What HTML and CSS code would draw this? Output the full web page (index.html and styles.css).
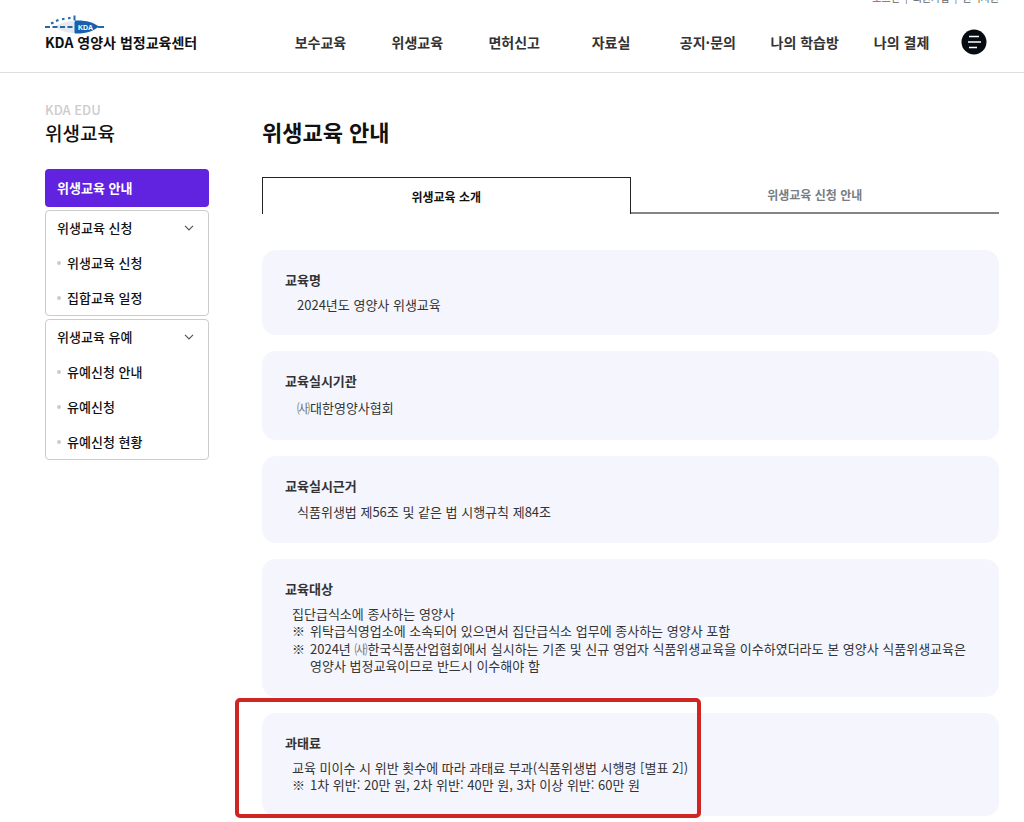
FILE: index.html
```html
<!DOCTYPE html>
<html lang="ko">
<head>
<meta charset="utf-8">
<meta name="viewport" content="width=device-width, initial-scale=1">
<title>위생교육 안내 - KDA 영양사 법정교육센터</title>
<link rel="stylesheet" href="styles.css">
</head>
<body>
<header class="header">
  <ul class="util">
    <li><a href="#">로그인</a></li>
    <li><a href="#">회원가입</a></li>
    <li><a href="#">원격지원</a></li>
  </ul>
  <div class="header-bar">
    <a class="logo" href="#">
      <svg class="logo-mark" viewBox="0 0 60 20" width="60" height="20" aria-hidden="true">
        <path d="M10 11.500C15 8 22 6.500 30 6V18C22 18 15 16 10 11.500Z" fill="#e6eaee"/>
        <path d="M30 5.500C40 5 48 7 54 11.500C48 16.500 40 19 30 18.500Z" fill="#1760ae"/>
        <path d="M0 12h5M7.500 12h5M15 12h5M22.500 12h5M53 12h6" stroke="#2468aa" stroke-width="2"/>
        <path d="M6 8.500l2.500-1M11 6l2.500-1M17 4.200l2.500-.5M23 3.200l2.500-.3M29.500 .5v5" stroke="#2468aa" stroke-width="2"/>
        <path d="M29.500 7v11" stroke="#78a6d2" stroke-width="1"/>
        <text x="33" y="14.500" class="logo-kda">KDA</text>
      </svg>
      <span class="logo-text">KDA 영양사 법정교육센터</span>
    </a>
    <nav class="gnb" aria-label="주 메뉴">
      <a href="#">보수교육</a>
      <a href="#">위생교육</a>
      <a href="#">면허신고</a>
      <a href="#">자료실</a>
      <a href="#">공지·문의</a>
      <a href="#">나의 학습방</a>
      <a href="#">나의 결제</a>
    </nav>
    <button class="menu-btn" type="button" aria-label="전체 메뉴">
      <svg viewBox="0 0 26 26" width="26" height="26" aria-hidden="true">
        <circle cx="13" cy="13" r="12.500" fill="#070b12"/>
        <path d="M8 7.500h10M7 13h13M8 18.500h8" stroke="#fff" stroke-width="1.500"/>
      </svg>
    </button>
  </div>
</header>

<div class="page">
  <aside class="side">
    <p class="side-eyebrow">KDA EDU</p>
    <h2 class="side-title">위생교육</h2>
    <nav class="lnb" aria-label="위생교육 메뉴">
      <a class="lnb-current" href="#" aria-current="page">위생교육 안내</a>
      <div class="lnb-group">
        <button class="lnb-head" type="button" aria-expanded="true">위생교육 신청
          <svg viewBox="0 0 10 6" width="10" height="6" aria-hidden="true"><path d="M1 .8l4 4 4-4" fill="none" stroke="#555" stroke-width="1.200"/></svg>
        </button>
        <ul class="lnb-list">
          <li><a href="#">위생교육 신청</a></li>
          <li><a href="#">집합교육 일정</a></li>
        </ul>
      </div>
      <div class="lnb-group">
        <button class="lnb-head" type="button" aria-expanded="true">위생교육 유예
          <svg viewBox="0 0 10 6" width="10" height="6" aria-hidden="true"><path d="M1 .8l4 4 4-4" fill="none" stroke="#555" stroke-width="1.200"/></svg>
        </button>
        <ul class="lnb-list">
          <li><a href="#">유예신청 안내</a></li>
          <li><a href="#">유예신청</a></li>
          <li><a href="#">유예신청 현황</a></li>
        </ul>
      </div>
    </nav>
  </aside>

  <main class="main">
    <h1 class="title">위생교육 안내</h1>
    <div class="tabs" role="tablist">
      <button class="tab tab-active" type="button" role="tab" aria-selected="true">위생교육 소개</button>
      <button class="tab" type="button" role="tab" aria-selected="false">위생교육 신청 안내</button>
    </div>
    <div class="cards">
      <section class="card">
        <h3>교육명</h3>
        <p class="value">2024년도 영양사 위생교육</p>
      </section>
      <section class="card">
        <h3>교육실시기관</h3>
        <p class="value value-tall"><span class="mark">㈔</span>대한영양사협회</p>
      </section>
      <section class="card">
        <h3>교육실시근거</h3>
        <p class="value value-mid">식품위생법 제56조 및 같은 법 시행규칙 제84조</p>
      </section>
      <section class="card">
        <h3>교육대상</h3>
        <div class="detail">
          <p>집단급식소에 종사하는 영양사</p>
          <ul class="notes">
            <li><p>위탁급식영업소에 소속되어 있으면서 집단급식소 업무에 종사하는 영양사 포함</p></li>
            <li><p>2024년 <span class="mark">㈔</span>한국식품산업협회에서 실시하는 기존 및 신규 영업자 식품위생교육을 이수하였더라도 본 영양사 식품위생교육은 영양사 법정교육이므로 반드시 이수해야 함</p></li>
          </ul>
        </div>
      </section>
      <section class="card card-marked">
        <h3>과태료</h3>
        <div class="detail">
          <p>교육 미이수 시 위반 횟수에 따라 과태료 부과(식품위생법 시행령 [별표 2])</p>
          <ul class="notes">
            <li><p>1차 위반: 20만 원, 2차 위반: 40만 원, 3차 이상 위반: 60만 원</p></li>
          </ul>
        </div>
      </section>
    </div>
  </main>
</div>
</body>
</html>
```

FILE: styles.css
```css
*,
*::before,
*::after {
  box-sizing: border-box;
}

body {
  margin: 0;
  background: #fff;
  color: #333;
  font-family: "Noto Sans CJK KR", "Noto Sans", sans-serif;
  font-size: 13px;
  word-break: keep-all;
}

h1, h2, h3, p, ul {
  margin: 0;
  padding: 0;
}

ul {
  list-style: none;
}

a {
  color: inherit;
  text-decoration: none;
}

button {
  margin: 0;
  padding: 0;
  border: 0;
  background: none;
  color: inherit;
  font: inherit;
  cursor: pointer;
}

.header {
  border-bottom: 1px solid #ddd;
}

.util {
  display: flex;
  justify-content: flex-end;
  align-items: flex-end;
  height: 4px;
  padding-right: 25px;
  overflow: hidden;
  color: #666;
  font-size: 10px;
  line-height: 12px;
}

.util li + li::before {
  content: "|";
  margin: 0 5px;
}

.header-bar {
  display: flex;
  align-items: center;
  height: 68px;
  padding: 8px 37px 0 45px;
}

.logo {
  flex: none;
  width: 227px;
  padding-bottom: 20px;
}

.logo-mark {
  display: block;
}

.logo-kda {
  fill: #fff;
  font-family: "Liberation Sans", sans-serif;
  font-size: 7px;
  font-weight: 700;
}

.logo-text {
  display: block;
  color: #111;
  font-size: 14px;
  font-weight: 700;
  line-height: 14px;
}

.gnb {
  display: flex;
  flex: 1;
}

.gnb a {
  flex: 1;
  font-size: 14px;
  font-weight: 700;
  line-height: 20px;
  text-align: center;
  white-space: nowrap;
}

.menu-btn {
  flex: none;
  width: 26px;
  height: 26px;
  margin-left: 11px;
}

.menu-btn svg {
  display: block;
}

.page {
  display: flex;
  gap: 53px;
  padding: 28px 25px 6px 45px;
}

.side {
  flex: none;
  width: 164px;
}

.side-eyebrow {
  color: #ccc;
  font-size: 13px;
  font-weight: 500;
  line-height: 18px;
}

.side-title {
  margin-bottom: 22px;
  color: #111;
  font-size: 19px;
  font-weight: 500;
  line-height: 28px;
}

.lnb {
  display: flex;
  flex-direction: column;
  gap: 3px;
  color: #111;
  font-weight: 500;
}

.lnb-current {
  padding: 0 12px;
  border-radius: 4px;
  background: #6123e0;
  color: #fff;
  font-weight: 700;
  line-height: 38px;
}

.lnb-group {
  border: 1px solid #ccc;
  border-radius: 4px;
}

.lnb-head {
  display: flex;
  justify-content: space-between;
  align-items: center;
  width: 100%;
  padding: 0 14px 0 11px;
  line-height: 34px;
}

.lnb-list a {
  display: flex;
  align-items: center;
  gap: 6px;
  padding-left: 11px;
  line-height: 35px;
}

.lnb-list a::before {
  content: "";
  width: 4px;
  height: 4px;
  border-radius: 50%;
  background: #ccc;
}

.main {
  flex: 1;
  min-width: 0;
}

.title {
  margin: 14px 0 30px;
  color: #111;
  font-size: 22px;
  font-weight: 700;
  line-height: 32px;
}

.tabs {
  display: grid;
  grid-template-columns: 1fr 1fr;
  margin-bottom: 36px;
}

.tab {
  height: 37px;
  border-bottom: 2px solid #848484;
  color: #777d84;
  font-size: 12px;
  font-weight: 700;
}

.tab-active {
  border: 1px solid #222;
  border-bottom: 0;
  color: #111;
}

.cards {
  display: flex;
  flex-direction: column;
  gap: 16px;
}

.card {
  padding: 20px 23px 21px;
  border-radius: 14px;
  background: #f5f6fd;
}

.card h3 {
  font-size: 13px;
  font-weight: 700;
  line-height: 20px;
}

.value {
  margin-top: 6px;
  padding-left: 12px;
  line-height: 18px;
}

.value-mid {
  line-height: 20px;
}

.value-tall {
  line-height: 22px;
}

.mark {
  color: #777;
}

.detail {
  margin-top: 6px;
  padding: 0 0 2px 7px;
  line-height: 17px;
}

.notes li {
  display: grid;
  grid-template-columns: 18px 1fr;
}

.notes li + li {
  margin-top: 1px;
}

.notes li::before {
  content: "※";
}

.card-marked {
  position: relative;
}

.card-marked::after {
  content: "";
  position: absolute;
  top: -15px;
  bottom: -2px;
  left: -27px;
  width: 466px;
  border: 4px solid #cf2624;
  border-radius: 5px;
  pointer-events: none;
}
```
